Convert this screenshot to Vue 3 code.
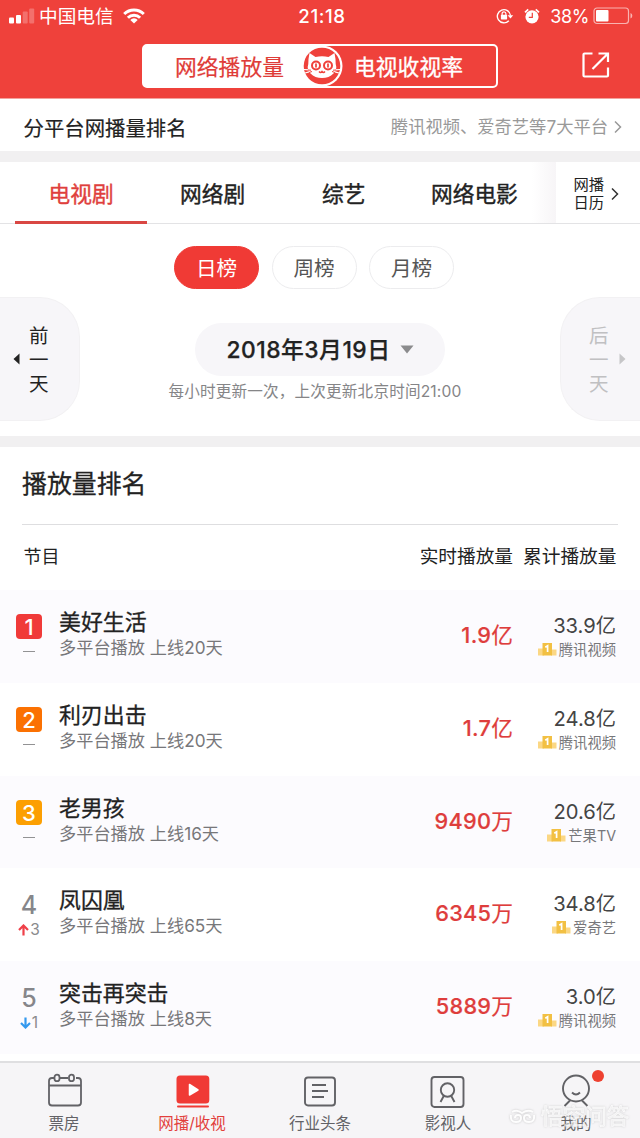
<script setup>
const tabs = [
  { label: '电视剧', cls: 'tab-a', active: true },
  { label: '网络剧', cls: 'tab-b' },
  { label: '综艺', cls: 'tab-c' },
  { label: '网络电影', cls: 'tab-d' }
]
const periods = ['日榜', '周榜', '月榜']
const shows = [
  { rank: 1, name: '美好生活', days: 20, live: '1.9', unit: '亿', total: '33.9', platform: '腾讯视频' },
  { rank: 2, name: '利刃出击', days: 20, live: '1.7', unit: '亿', total: '24.8', platform: '腾讯视频' },
  { rank: 3, name: '老男孩', days: 16, live: '9490', unit: '万', total: '20.6', platform: '芒果TV' },
  { rank: 4, name: '凤囚凰', days: 65, live: '6345', unit: '万', total: '34.8', platform: '爱奇艺', up: 3 },
  { rank: 5, name: '突击再突击', days: 8, live: '5889', unit: '万', total: '3.0', platform: '腾讯视频', down: 1 }
]
</script>

<template>
  <div class="app">
    <header class="top">
      <div class="status">
        <div class="carrier">
          <svg width="26" height="18" viewBox="0 0 26 18" fill="#fff">
            <rect x="0" y="10.500" width="5" height="6" rx="1" />
            <rect x="7" y="8" width="5" height="8.500" rx="1" />
            <rect x="13.700" y="4.500" width="5" height="12" rx="1" opacity=".25" />
            <rect x="20.200" y="1.500" width="5" height="15" rx="1" opacity=".25" />
          </svg>
          <span class="carrier-name">中国电信</span>
          <svg class="wifi" width="22" height="16" viewBox="0 0 22 16" fill="none" stroke="#fff" stroke-width="3">
            <path d="M1.200 6A14 14 0 0 1 20.800 6" />
            <path d="M4.900 9.700A8.600 8.600 0 0 1 17.100 9.700" />
            <path d="M11 15.500L7.300 11.900A5.200 5.200 0 0 1 14.700 11.900Z" fill="#fff" stroke="none" />
          </svg>
        </div>
        <div class="clock">21:18</div>
        <div class="battery">
          <svg width="18" height="16" viewBox="0 0 18 16" fill="none" stroke="#fff" stroke-width="1.400">
            <path d="M12.800 12.700A6.600 6.600 0 1 1 14.500 7.500" />
            <path d="M11.600 7.200H17.200L14.500 10.600Z" fill="#fff" stroke="none" />
            <rect x="4.900" y="6.800" width="6.200" height="4.700" rx=".7" fill="#fff" stroke="none" />
            <path d="M6.100 7V5.700a1.900 1.900 0 0 1 3.800 0V7" stroke-width="1.200" />
          </svg>
          <svg class="alarm" width="16" height="16" viewBox="0 0 16 16">
            <circle cx="8" cy="8.800" r="6.600" fill="#fff" />
            <path d="M1 4.400L4.200 1.400M15 4.400L11.800 1.400" stroke="#fff" stroke-width="1.700" />
            <path d="M8.300 4.800V9.300H4.800" fill="none" stroke="#ef413b" stroke-width="1.200" />
          </svg>
          <span class="percent">38%</span>
          <svg width="40" height="18" viewBox="0 0 40 18">
            <rect x="1" y="1" width="34.500" height="15.500" rx="3" fill="none" stroke="#fff" stroke-opacity=".6" stroke-width="1.200" />
            <rect x="3" y="3" width="12.500" height="11.500" rx="1" fill="#fff" />
            <path d="M37.500 6v5.500q1.800-.6 1.800-2.750T37.500 6" fill="#fff" opacity=".6" />
          </svg>
        </div>
      </div>
      <div class="switcher">
        <div class="switch-on">网络播放量</div>
        <div class="switch-off">电视收视率</div>
        <svg class="cat" width="42" height="42" viewBox="0 0 42 42">
          <circle cx="21" cy="21" r="20.500" fill="#fff" />
          <circle cx="21" cy="21" r="18.300" fill="#ef413b" />
          <path d="M8.500 8L14.500 12Q21 10.500 27.500 12L33.500 8Q34.800 14 34.700 19Q36.500 24.500 32.500 28.500Q28 33 21 33T9.500 28.500Q5.500 24.500 7.300 19Q7.200 14 8.500 8Z" fill="#fff" />
          <circle cx="15" cy="20.500" r="4" fill="#fff" stroke="#ef413b" stroke-width="2" />
          <circle cx="27" cy="20.500" r="4" fill="#fff" stroke="#ef413b" stroke-width="2" />
          <path d="M15 18.500v4M27 18.500v4" stroke="#ef413b" stroke-width="1.700" />
          <path d="M18 26.500q1.600 2 3 0q1.400 2 3 0" fill="none" stroke="#ef413b" stroke-width="1.400" />
          <path d="M3 24.500l5 .3M4 28l5-1.300M39 24.500l-5 .3M38 28l-5-1.300" stroke="#fff" stroke-width="1.200" />
          <path d="M7 25l3 .2M8 27.500l3-1M35 25l-3 .2M34 27.500l-3-1" stroke="#ef413b" stroke-width="1" />
        </svg>
      </div>
      <svg class="share" width="30" height="28" viewBox="0 0 30 28" fill="none" stroke="#fff" stroke-width="2.200">
        <path d="M11.500 2.500H3.500Q2.500 2.500 2.500 3.500V24.500Q2.500 25.500 3.500 25.500H26Q27 25.500 27 24.500V16.500" />
        <path d="M17.500 2.500H27V11M26.500 3L11.500 18" />
      </svg>
    </header>

    <div class="platforms">
      <span class="platform-title">分平台网播量排名</span>
      <span class="platform-more">腾讯视频、爱奇艺等7大平台</span>
      <svg width="8" height="14" viewBox="0 0 8 14" fill="none" stroke="#999" stroke-width="1.500"><path d="M1 1.500L6.500 7L1 12.500" /></svg>
    </div>
    <div class="gap"></div>

    <nav class="tabs">
      <div v-for="tab in tabs" :key="tab.label" class="tab" :class="[tab.cls, { active: tab.active }]">{{ tab.label }}</div>
      <div class="fade"></div>
      <div class="calendar">
        <span>网播<br>日历</span>
        <svg width="8" height="14" viewBox="0 0 8 14" fill="none" stroke="#333" stroke-width="1.500"><path d="M1 1.500L6.500 7L1 12.500" /></svg>
      </div>
    </nav>

    <section class="dates">
      <div class="day prev">
        <svg width="7" height="12" viewBox="0 0 7 12"><path d="M6.500 .5V11.500L.5 6Z" fill="#222" /></svg>
        <span>前<br>一<br>天</span>
      </div>
      <div class="date-main">
        <div class="periods">
          <div v-for="(period, i) in periods" :key="period" class="period" :class="{ chosen: i === 0 }">{{ period }}</div>
        </div>
        <div class="date">
          <span>2018年3月19日</span>
          <svg width="14" height="9" viewBox="0 0 14 9"><path d="M.5 .5H13.500L7 8.500Z" fill="#8b8b8d" /></svg>
        </div>
        <div class="note">每小时更新一次，上次更新北京时间21:00</div>
      </div>
      <div class="day next">
        <span>后<br>一<br>天</span>
        <svg width="7" height="12" viewBox="0 0 7 12"><path d="M.5 .5V11.500L6.500 6Z" fill="#c6c6c8" /></svg>
      </div>
    </section>
    <div class="gap"></div>

    <main class="ranking">
      <h1>播放量排名</h1>
      <div class="columns">
        <span class="col-name">节目</span>
        <span>实时播放量</span>
        <span class="col-total">累计播放量</span>
      </div>
      <div v-for="show in shows" :key="show.rank" class="show">
        <div class="rank">
          <div class="num" :class="'num' + show.rank">{{ show.rank }}</div>
          <div class="trend">
            <template v-if="show.up || show.down">
              <svg width="11" height="12" viewBox="0 0 11 12" fill="none" stroke-width="2.200">
                <path v-if="show.up" d="M5.500 11.500V2M1 6L5.500 1.500L10 6" stroke="#ef4049" />
                <path v-else d="M5.500 .5V10M1 6L5.500 10.500L10 6" stroke="#3499ee" />
              </svg>{{ show.up || show.down }}
            </template>
            <i v-else></i>
          </div>
        </div>
        <div class="info">
          <div class="name">{{ show.name }}</div>
          <div class="sub">多平台播放 上线{{ show.days }}天</div>
        </div>
        <div class="live"><b>{{ show.live }}</b>{{ show.unit }}</div>
        <div class="sum">
          <div class="total">{{ show.total }}亿</div>
          <div class="platform">
            <svg width="19" height="13" viewBox="0 0 19 13">
              <path d="M0 5.500H6V12.500H0ZM13 6.500H18.500V12.500H13Z" fill="#fbd784" />
              <rect x="4.500" y="0" width="9.500" height="12.500" fill="#f2c043" />
              <path d="M7.300 4.300L9.600 2.800V9" fill="none" stroke="#fff" stroke-width="1.700" />
            </svg>
            <span>{{ show.platform }}</span>
          </div>
        </div>
      </div>
    </main>

    <footer class="bar">
      <div class="item">
        <svg width="36" height="36" viewBox="0 0 36 36" fill="none" stroke="#626266" stroke-width="1.800">
          <path d="M8 6H6Q3 6 3 9V30.500Q3 33.500 6 33.500H32Q35 33.500 35 30.500V9Q35 6 32 6H30M14 6H22M3 13.500H35" />
          <rect x="8.500" y="2.700" width="5" height="6.500" rx="2.500" />
          <rect x="23" y="2.700" width="5" height="6.500" rx="2.500" />
        </svg>
        <span>票房</span>
      </div>
      <div class="item on">
        <svg width="36" height="36" viewBox="0 0 36 36" fill="#f03a35">
          <rect x="2.500" y="3.500" width="32.800" height="28" rx="3.500" />
          <rect x="3" y="33.500" width="32" height="2" rx="1" />
          <path d="M15.500 12.500V23L24 18Z" fill="#fff" stroke="#fff" stroke-width="1.500" stroke-linejoin="round" />
        </svg>
        <span>网播/收视</span>
      </div>
      <div class="item">
        <svg width="36" height="36" viewBox="0 0 36 36" fill="none" stroke="#626266" stroke-width="1.900">
          <rect x="3" y="5.500" width="30" height="28" rx="3" />
          <path d="M10 13H24M10 19H26M10 25H22" />
        </svg>
        <span>行业头条</span>
      </div>
      <div class="item">
        <svg width="36" height="36" viewBox="0 0 36 36" fill="none" stroke="#626266" stroke-width="1.900">
          <rect x="1.500" y="5" width="32" height="30" rx="3" />
          <circle cx="17.500" cy="18" r="6.700" />
          <path d="M14 23.500L10.500 30M21 23.500L24.500 30" />
        </svg>
        <span>影视人</span>
      </div>
      <div class="item">
        <svg width="36" height="36" viewBox="0 0 36 36" fill="none" stroke="#626266" stroke-width="1.900">
          <circle cx="18" cy="16.500" r="13" />
          <path d="M14 20.500Q18 24.500 22 20.500M12 28.500L6.500 34M24 28.500L29.500 34" />
        </svg>
        <span>我的</span>
        <div class="dot"></div>
      </div>
      <div class="mark">
        <svg width="27" height="15" viewBox="0 0 27 15" fill="none" stroke="#fff" stroke-width="2">
          <path d="M2 6Q1 13 7 13Q12 13 12 9Q12 6 9 6Q6 6 6 9M25 6Q26 13 20 13Q15 13 15 9Q15 6 18 6Q21 6 21 9M3 3Q8 0 13 4Q19 0 24 3" />
        </svg>
        <span>悟空问答</span>
      </div>
    </footer>
  </div>
</template>

<style>
body { margin: 0; background: #fff; }
</style>

<style scoped>
.app { width: 640px; height: 1138px; overflow: hidden; display: flex; flex-direction: column; background: #fff; color: #222; font-family: Inter, "Noto Sans CJK SC", sans-serif; white-space: nowrap; }
.app > * { flex-shrink: 0; box-sizing: border-box; }
svg { flex-shrink: 0; display: block; }
.top { position: relative; height: 99px; background: #ef413b; color: #fff; border-bottom: 1px solid #f3a29d; }
.status { height: 32px; display: grid; grid-template-columns: 1fr auto 1fr; align-items: center; padding: 0 7px 0 9px; }
.carrier, .battery { display: flex; align-items: center; }
.carrier-name { margin-left: 4px; font-size: 18.700px; line-height: 30px; padding-top: 2px; }
.wifi { margin-left: 9px; }
.clock { font-size: 18.700px; font-weight: 500; letter-spacing: .6px; padding-left: 2px; }
.battery { justify-content: flex-end; }
.alarm { margin-left: 10px; }
.percent { font-size: 18px; letter-spacing: -.4px; margin: 0 4px 0 10px; }
.switcher { position: relative; width: 356px; height: 44px; box-sizing: border-box; margin: 12px 0 0 142px; border: 2px solid #fff; border-radius: 5px; display: grid; grid-template-columns: 1fr 1fr; line-height: 40px; font-size: 21.800px; }
.switch-on { background: #fff; color: #df3c38; padding: 1px 0 0 31px; height: 39px; -webkit-text-stroke: .2px; }
.switch-off { padding: 1px 0 0 34px; height: 39px; -webkit-text-stroke: .3px; }
.cat { position: absolute; left: 157px; top: -1px; }
.share { position: absolute; left: 581px; top: 51px; }
.platforms { height: 52px; padding: 3px 18px 0 23.500px; display: flex; align-items: center; font-size: 20.400px; }
.platform-title { -webkit-text-stroke: .2px; }
.platform-more { margin-left: auto; margin-right: 6px; margin-top: -2px; font-size: 17.300px; color: #999; }
.gap { height: 11px; background: #f1f0f1; }
.tabs { position: relative; height: 62px; border-bottom: 1px solid #e3e3e5; display: flex; font-size: 21.700px; line-height: 64px; }
.tab { -webkit-text-stroke: .4px; box-sizing: border-box; }
.tab-a { margin-left: 15px; width: 132px; padding-left: 33.500px; }
.tab-b { padding-left: 33px; width: 175px; }
.tab-c { width: 109px; }
.active { height: 62px; color: #df3f3d; border-bottom: 3px solid #d94743; }
.fade { position: absolute; left: 532px; top: 0; width: 24px; height: 61px; background: linear-gradient(90deg, #fff0, #f7f5f7); }
.calendar { position: absolute; left: 556px; right: 0; top: 0; height: 61px; box-sizing: border-box; padding: 3px 0 0 17.500px; background: #fff; display: flex; align-items: center; gap: 7px; font-size: 15.300px; line-height: 18px; }
.dates { height: 212px; display: grid; grid-template-columns: 80px 1fr 80px; }
.day { margin-top: 73px; height: 124px; box-sizing: border-box; border: 1px solid #f2f1f3; background: #f7f6f9; display: flex; align-items: center; font-size: 19.500px; line-height: 24px; }
.day span { padding-top: 2px; }
.prev { border-left: 0; border-radius: 0 40px 40px 0; padding-left: 13px; gap: 9px; }
.next { border-right: 0; border-radius: 40px 0 0 40px; padding-left: 28px; gap: 10px; color: #c0c0c2; }
.date-main { display: flex; flex-direction: column; align-items: center; }
.periods { margin: 22px 0 0 -12px; display: flex; gap: 12.500px; }
.period { width: 85px; height: 43px; box-sizing: border-box; border: 1px solid #ececee; border-radius: 22px; text-align: center; font-size: 20.600px; line-height: 43px; color: #555; }
.chosen { background: #f03a35; border-color: #f03a35; color: #fff; }
.date { margin-top: 34px; width: 250px; height: 53px; box-sizing: border-box; padding-bottom: 3px; border-radius: 27px; background: #f7f6f9; display: flex; justify-content: center; align-items: center; gap: 9px; font-size: 22.800px; font-weight: 500; letter-spacing: .5px; -webkit-text-stroke: .25px; }
.date svg { margin-top: 2px; }
.note { margin-top: 6px; margin-left: -10px; font-size: 15.600px; letter-spacing: .17px; line-height: 20px; color: #858587; }
h1 { margin: 0 22px; height: 78px; box-sizing: border-box; line-height: 75px; border-bottom: 1px solid #dedee0; font-size: 24.900px; font-weight: 400; -webkit-text-stroke: .3px; }
.columns { height: 65px; padding: 0 23.500px; display: flex; line-height: 64px; font-size: 18.700px; }
.col-name { margin-right: auto; font-size: 18px; }
.col-total { margin-left: 10px; }
.show { height: 92.800px; box-sizing: border-box; padding: 0 24px 0 16px; display: grid; grid-template-columns: 43px 1fr auto 103px; }
.show:nth-child(odd) { background: #fcfbfe; }
.rank { width: 26px; padding-top: 24px; display: flex; flex-direction: column; align-items: center; }
.num { width: 26px; height: 25px; border-radius: 4px; text-align: center; font-size: 22px; line-height: 26px; font-weight: 500; color: #fff; }
.num1 { background: #f03a39; }
.num2 { background: #fb7102; }
.num3 { background: #fc9f02; }
.num4, .num5 { color: #86868a; font-size: 25px; line-height: 27px; }
.trend { display: flex; align-items: center; gap: 1px; height: 25px; font-size: 15.500px; color: #8a8a8c; }
.trend i { width: 12px; height: 1px; background: #929294; }
.name { margin-top: 19px; font-size: 21.900px; line-height: 26px; -webkit-text-stroke: .3px; }
.sub { font-size: 17.200px; line-height: 25px; color: #77777a; }
.live { padding-top: 30px; font-size: 21.700px; line-height: 30px; color: #de3d3c; -webkit-text-stroke: .2px; }
.live b { font-weight: 500; letter-spacing: .3px; }
.sum { display: flex; flex-direction: column; align-items: flex-end; }
.total { margin-top: 21px; font-size: 20.200px; line-height: 29px; color: #444; }
.platform { height: 19px; display: flex; align-items: center; gap: 2px; font-size: 14.300px; line-height: 19px; color: #77777a; }
.bar { position: relative; margin-top: auto; height: 77px; border-top: 2px solid #dfdfe1; background: #f6f5f7; display: grid; grid-template-columns: repeat(5, 1fr); }
.item { position: relative; padding-top: 9px; display: flex; flex-direction: column; align-items: center; font-size: 15.500px; color: #626266; }
.item span { line-height: 20px; margin-top: 6px; }
.on { color: #e23e3c; }
.dot { position: absolute; left: 80px; top: 7px; width: 12px; height: 12px; border-radius: 6px; background: #ee4130; }
.mark { position: absolute; left: 509px; top: 38px; display: flex; align-items: center; gap: 5px; font-size: 22px; line-height: 30px; color: #fffa; filter: drop-shadow(0 0 1px #bbb); opacity: .8; -webkit-text-stroke: .5px #fff; }
</style>
